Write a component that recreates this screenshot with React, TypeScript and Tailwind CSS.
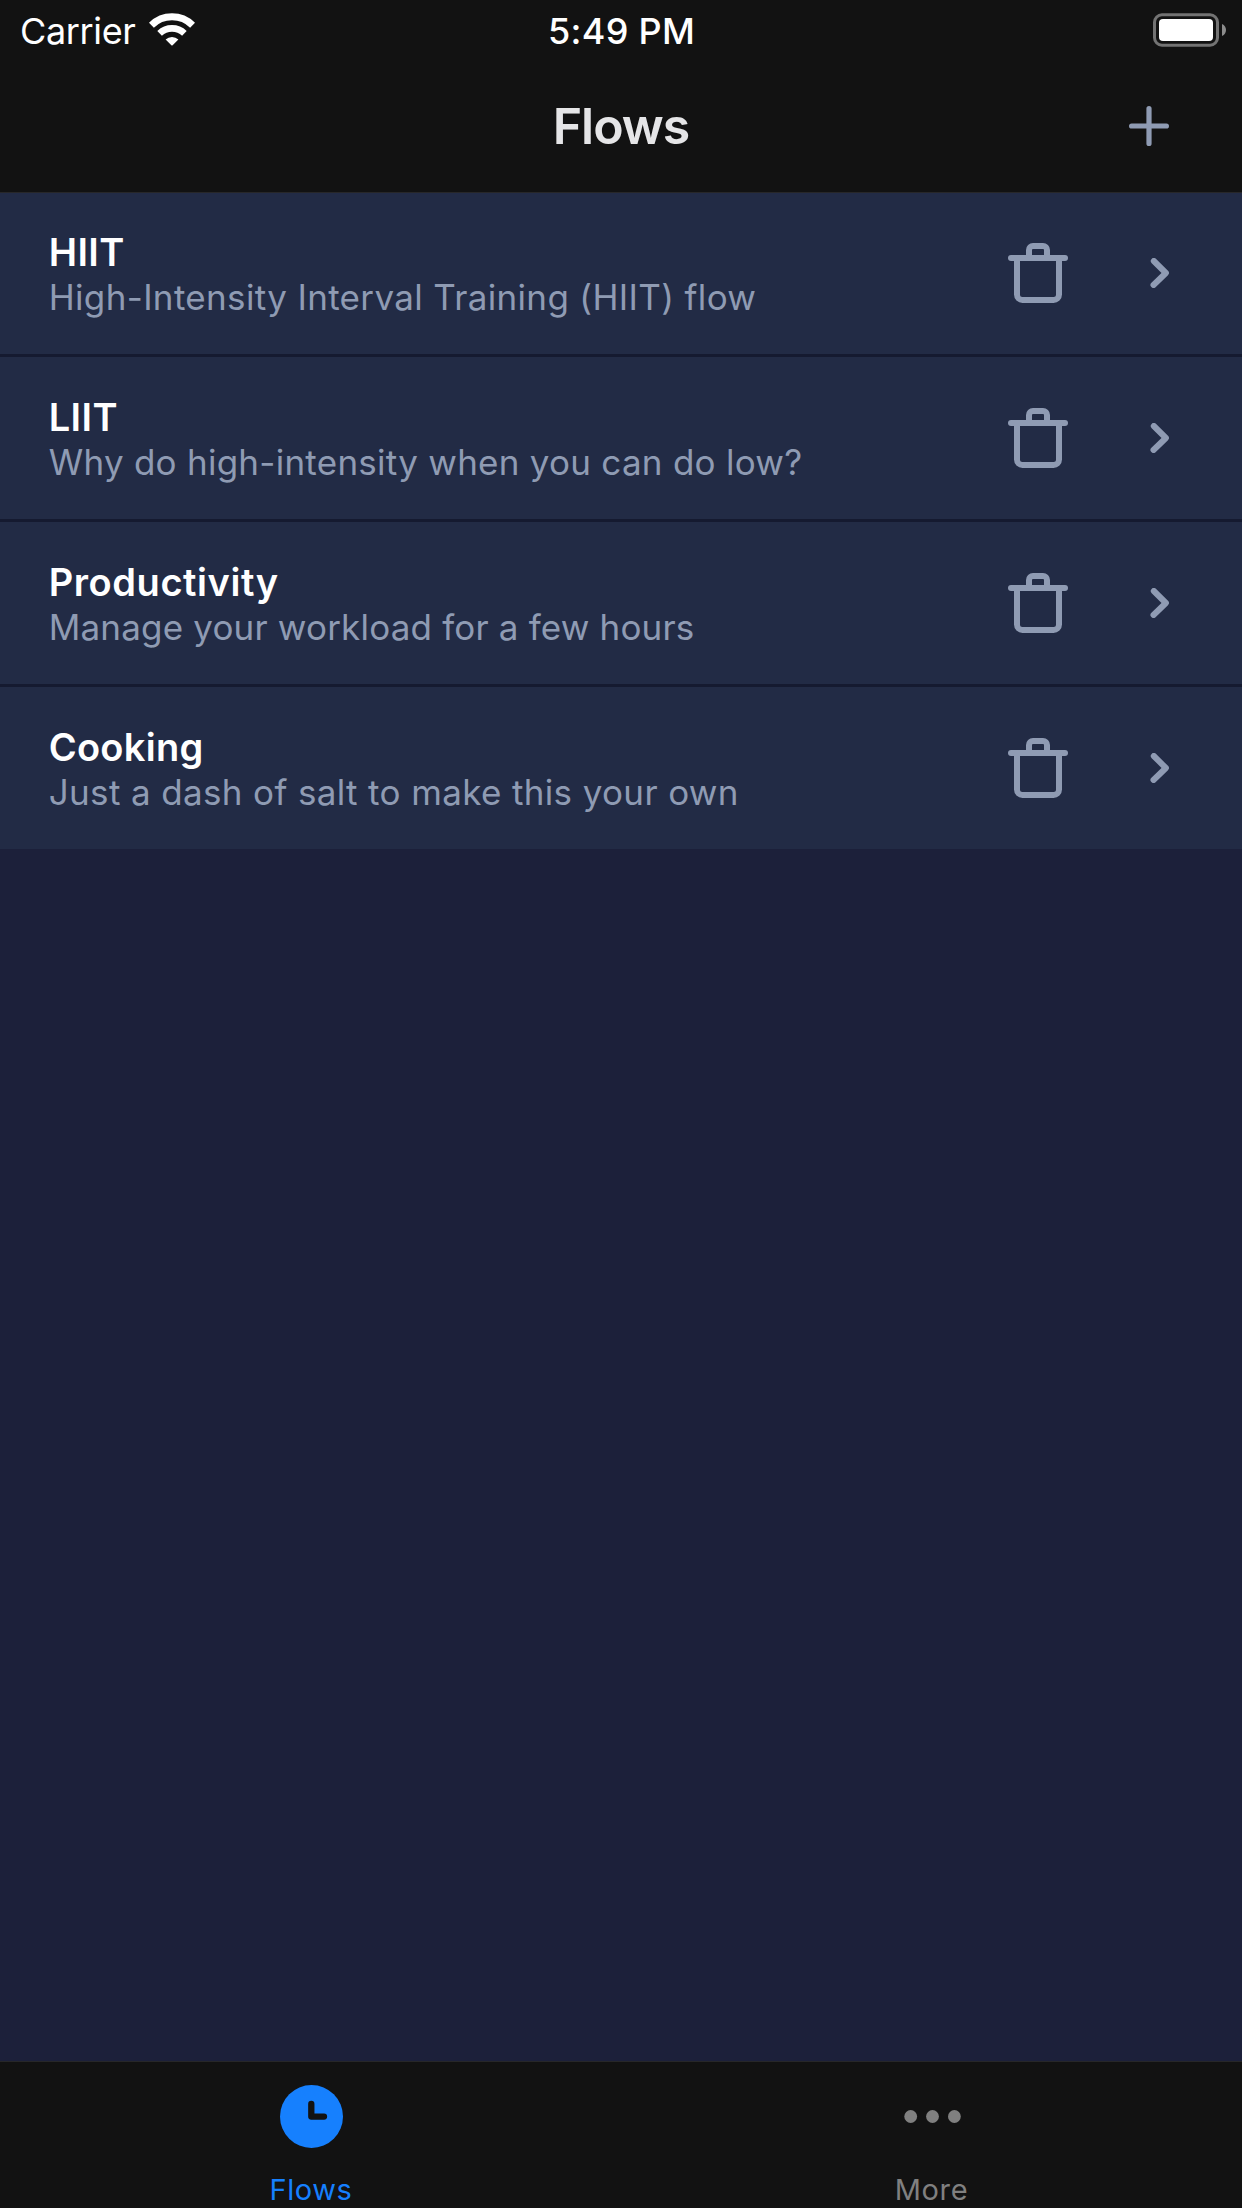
const flows = [
  { title: "HIIT", text: "High-Intensity Interval Training (HIIT) flow", titleClass: "tracking-[0.4px]", textClass: "tracking-[0.34px]" },
  { title: "LIIT", text: "Why do high-intensity when you can do low?", titleClass: "tracking-[0.4px]", textClass: "tracking-[0.26px]" },
  { title: "Productivity", text: "Manage your workload for a few hours", titleClass: "tracking-[0.57px]", textClass: "tracking-[0.18px]" },
  { title: "Cooking", text: "Just a dash of salt to make this your own", titleClass: "tracking-[0.27px]", textClass: "tracking-[0.36px]" },
];

function WifiIcon() {
  return (
    <svg width="46" height="34" viewBox="0 0 46 34" fill="none" stroke="#fff">
      <path d="M2.4 12.2a29.3 29.3 0 0 1 41.2 0" strokeWidth="7" />
      <path d="M10.6 20.4a17.8 17.8 0 0 1 24.8 0" strokeWidth="6.6" />
      <path d="M16.6 26.4a9.4 9.4 0 0 1 12.8 0L23.6 32.3q-.6.5-1.2 0Z" fill="#fff" stroke="none" />
    </svg>
  );
}

function BatteryIcon() {
  return (
    <svg width="73" height="34" viewBox="0 0 73 34" fill="none">
      <rect x="1.5" y="1.75" width="63" height="30.5" rx="7.5" stroke="#737373" strokeWidth="3" />
      <rect x="6" y="6" width="54" height="22" rx="4" fill="#fff" />
      <path d="M69 11c2.7 1.2 4 3.4 4 6s-1.3 4.8-4 6Z" fill="#8c8c8c" />
    </svg>
  );
}

function TrashIcon() {
  return (
    <svg width="60" height="60" viewBox="0 0 60 60" fill="none" stroke="#8f9bb3" strokeWidth="6" strokeLinecap="round">
      <path d="M3 15H57" />
      <path d="M21 15V7a4 4 0 0 1 4-4H35a4 4 0 0 1 4 4V15" />
      <path d="M9 15V51.5a5.5 5.500 0 0 0 5.500 5.500H45.500a5.500 5.500 0 0 0 5.500-5.500V15" />
    </svg>
  );
}

function ChevronIcon() {
  return (
    <svg width="19" height="30" viewBox="0 0 19 30" fill="none" stroke="#8f9bb3" strokeWidth="6" strokeLinecap="round" strokeLinejoin="round">
      <path d="M3.800 3L15.900 15L3.500 27" />
    </svg>
  );
}

export default function App() {
  return (
    <div className="flex h-[2208px] w-[1242px] flex-col overflow-hidden bg-[#1c203a] font-['Inter',sans-serif]">
      <header className="relative z-10 h-[193px] shrink-0 border-b border-[#272729] bg-[#121212]">
        <div className="grid h-[62px] grid-cols-3 text-[36px] leading-[62px] text-white">
          <div className="flex pl-5">
            <span className="w-[129px] tracking-[-0.35px]">Carrier</span>
            <span className="pt-[13px]"><WifiIcon /></span>
          </div>
          <div className="pl-px text-center font-[550] tracking-[0.3px]">5:49 PM</div>
          <div className="flex justify-end pt-[13px] pr-4"><BatteryIcon /></div>
        </div>
        <div className="grid h-[128px] grid-cols-3 items-center">
          <h1 className="col-start-2 text-center text-[50px] leading-[128px] font-semibold tracking-[-1px] text-[#e5e5e7]">Flows</h1>
          <button className="flex justify-end pr-[73px]" aria-label="Add flow">
            <svg width="40" height="40" viewBox="0 0 40 40" stroke="#8f9bb3" strokeWidth="5.200" strokeLinecap="round">
              <path d="M20 2.600V37.400M2.600 20H37.400" />
            </svg>
          </button>
        </div>
      </header>

      <main className="-mt-px grow">
        <ul className="divide-y-3 divide-[#151a30]">
          {flows.map((flow) => (
            <li key={flow.title}>
              <div className="flex h-[162px] justify-between bg-[#222b45]">
                <div className="pt-[37px] pl-[48.700px]">
                  <h2 className={`text-[38px] leading-[46px] font-semibold text-white ${flow.titleClass}`}>{flow.title}</h2>
                  <p className={`text-[35px] leading-[44px] whitespace-nowrap text-[#8f9bb3] ${flow.textClass}`}>{flow.text}</p>
                </div>
                <div className="flex items-center gap-[82px] pr-[73px]">
                  <TrashIcon />
                  <ChevronIcon />
                </div>
              </div>
            </li>
          ))}
        </ul>
      </main>

      <nav className="grid h-[147px] shrink-0 grid-cols-2 border-t border-[#272729] bg-[#121212] text-[29px] leading-[35px]">
        <a className="flex flex-col items-center gap-6 pt-[23px] text-[#1680fe]">
          <span className="pl-0.5">
            <svg width="63" height="63" viewBox="0 0 63 63" fill="none">
              <circle cx="31.500" cy="31.500" r="31.500" fill="#1680fe" />
              <path d="M31.300 19V31.600H44" stroke="#121212" strokeWidth="6.300" strokeLinecap="round" strokeLinejoin="round" />
            </svg>
          </span>
          <span className="pl-px tracking-[0.6px]">Flows</span>
        </a>
        <a className="flex flex-col items-center gap-6 pt-[23px] text-[#808080]">
          <span className="pl-0.5">
            <svg width="63" height="63" viewBox="0 0 63 63" fill="#808080">
              <circle cx="9.700" cy="31.500" r="6.400" />
              <circle cx="31.500" cy="31.500" r="6.400" />
              <circle cx="53.400" cy="31.500" r="6.400" />
            </svg>
          </span>
          <span className="tracking-[0.6px]">More</span>
        </a>
      </nav>
    </div>
  );
}
